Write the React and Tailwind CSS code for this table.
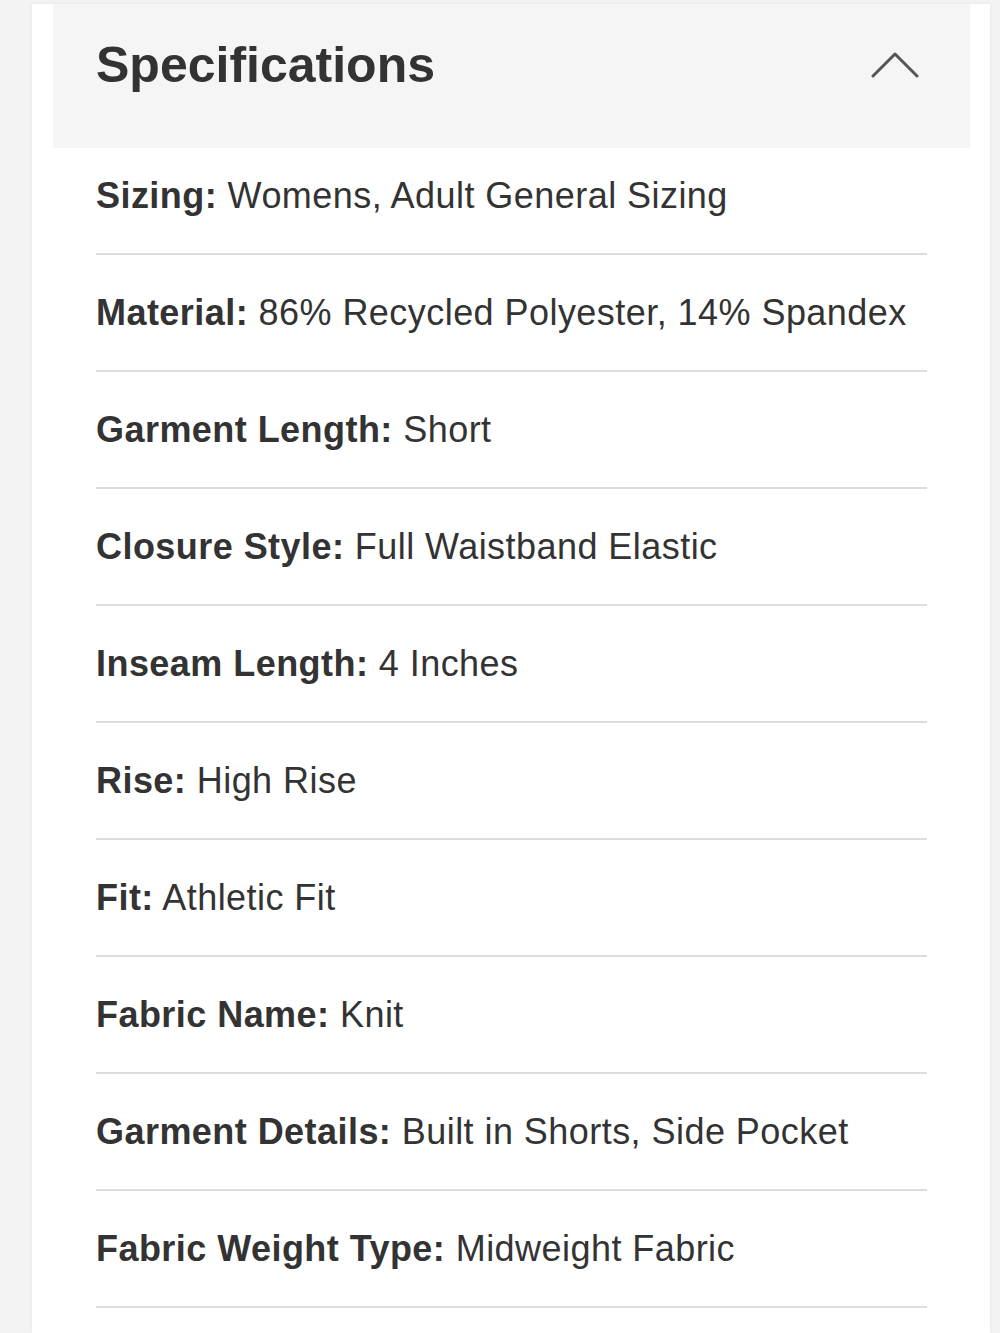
const specs = [
  ["Sizing", "Womens, Adult General Sizing"],
  ["Material", "86% Recycled Polyester, 14% Spandex"],
  ["Garment Length", "Short"],
  ["Closure Style", "Full Waistband Elastic"],
  ["Inseam Length", "4 Inches"],
  ["Rise", "High Rise"],
  ["Fit", "Athletic Fit"],
  ["Fabric Name", "Knit"],
  ["Garment Details", "Built in Shorts, Side Pocket"],
  ["Fabric Weight Type", "Midweight Fabric"],
];

function ChevronUp() {
  return (
    <svg width="48" height="30" viewBox="0 0 48 30" fill="none">
      <path d="M2 26 L24 4 L46 26" stroke="#555" strokeWidth="3" strokeLinecap="round" strokeLinejoin="round" />
    </svg>
  );
}

export default function App() {
  return (
    <div
      className="min-h-[1333px] bg-[#f3f3f3] pt-[4px] pl-[32px] pr-[10px] text-[#333]"
      style={{ fontFamily: '"Liberation Sans", Arial, sans-serif' }}
    >
      <div className="bg-white min-h-[1329px] shadow-[0_0_4px_rgba(0,0,0,0.06)]">
        <div className="ml-[21px] mr-[20px] h-[144px] bg-[#f5f5f5] flex items-center justify-between pl-[43px] pr-[51px] pb-[22px]">
          <h2 className="text-[50px] font-bold leading-none">Specifications</h2>
          <ChevronUp />
        </div>
        <div className="pl-[64px] pr-[63px]">
          {specs.map(([label, value], i) => (
            <div
              key={label}
              className={`border-b-2 border-[#dcdcdc] text-[36px] leading-[40px] tracking-[0.45px] whitespace-nowrap ${i === 0 ? "pt-[28px] pb-[37px]" : "pt-[38px] pb-[37px]"}`}
            >
              <span className="font-bold">{label}:</span> {value}
            </div>
          ))}
        </div>
      </div>
    </div>
  );
}
